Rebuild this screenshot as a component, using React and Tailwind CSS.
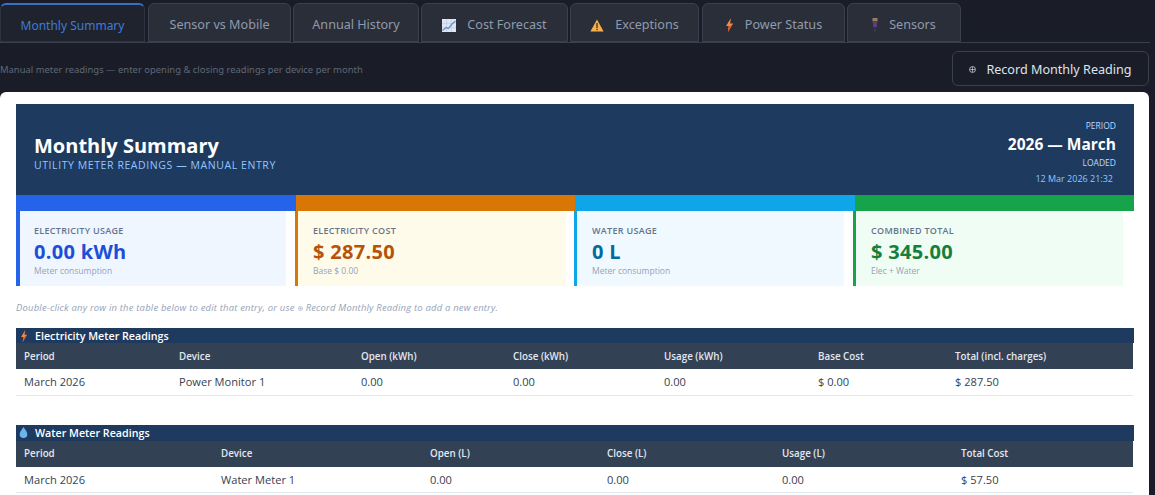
const Bolt = ({ className }) => (
  <svg viewBox="0 0 10 18" className={className}>
    <path d="M6.8 0 L0.6 10.4 H4 L3 18 L9.6 7 H5.8 Z" fill="#f58a3c" />
    <path d="M4 10.4 H5.8 L9.6 7 L3 18 Z" fill="#e2553a" />
  </svg>
);

const ChartIcon = () => (
  <svg viewBox="0 0 14 13" className="w-[14px] h-[13px]">
    <rect width="14" height="13" fill="#dfe6f2" />
    <path d="M0 4.3H14M0 8.6H14M4.6 0V13M9.3 0V13" stroke="#bcc8dc" strokeWidth="0.6" />
    <path d="M0.5 11.5 L4 8.5 L6.5 9.5 L10 5 L13.5 2" fill="none" stroke="#6b93cf" strokeWidth="1.4" />
  </svg>
);

const WarnIcon = () => (
  <svg viewBox="0 0 14 13" className="w-[14px] h-[13px]">
    <path d="M7 0.5 L13.6 12.5 H0.4 Z" fill="#f6b14c" />
    <rect x="6.3" y="4" width="1.4" height="5" fill="#4b3a1c" />
    <rect x="6.3" y="9.8" width="1.4" height="1.4" fill="#4b3a1c" />
  </svg>
);

const ProbeIcon = () => (
  <svg viewBox="0 0 6 14" className="w-[6px] h-[14px]">
    <rect x="0.5" y="0" width="5" height="3" fill="#9a7a63" />
    <rect x="0.5" y="3" width="5" height="2" fill="#4f4650" />
    <rect x="1" y="5" width="4" height="4" fill="#5b3c86" />
    <rect x="2.2" y="9" width="1.6" height="5" fill="#3c3550" />
  </svg>
);

const Drop = () => (
  <svg viewBox="0 0 10 13" className="w-[9px] h-[11px]">
    <path d="M5 0 C6.5 3 9.5 5.5 9.5 8.5 A4.5 4.5 0 0 1 0.5 8.5 C0.5 5.5 3.5 3 5 0 Z" fill="#6cb4ee" />
  </svg>
);

const RecordGlyph = ({ className }) => (
  <svg viewBox="0 0 8 8" className={className}>
    <circle cx="4" cy="4" r="3.4" fill="none" stroke="currentColor" strokeWidth="0.8" />
    <path d="M1 4H7M4 1V7" stroke="currentColor" strokeWidth="0.7" />
  </svg>
);

const tabs = [
  { label: "Monthly Summary", width: "w-[145px] mr-px", active: true },
  { label: "Sensor vs Mobile", width: "w-[143px]" },
  { label: "Annual History", width: "w-[126px]" },
  { label: "Cost Forecast", width: "w-[147px]", icon: <ChartIcon /> },
  { label: "Exceptions", width: "w-[129px] mr-px", icon: <WarnIcon /> },
  { label: "Power Status", width: "w-[143px]", icon: <Bolt className="w-[9px] h-[14px]" /> },
  { label: "Sensors", width: "w-[114px]", icon: <ProbeIcon /> },
];

const stats = [
  {
    label: "ELECTRICITY USAGE",
    value: "0.00 kWh",
    note: "Meter consumption",
    bar: "bg-[#2563eb]",
    card: "mr-[10px] border-l-4 pl-[14px] bg-[#eff6ff] border-[#2563eb]",
    text: "text-[#1d4ed8]",
  },
  {
    label: "ELECTRICITY COST",
    value: "$ 287.50",
    note: "Base $ 0.00",
    bar: "bg-[#d97706]",
    card: "-ml-[0.5px] mr-[9px] border-l-[3px] pl-[15px] bg-[#fffbeb] border-[#d97706]",
    text: "text-[#b45309]",
  },
  {
    label: "WATER USAGE",
    value: "0 L",
    note: "Meter consumption",
    bar: "bg-[#0ea5e9]",
    card: "-ml-px mr-[10.5px] border-l-[3px] pl-[15px] bg-[#f0f9ff] border-[#0ea5e9]",
    text: "text-[#0369a1]",
  },
  {
    label: "COMBINED TOTAL",
    value: "$ 345.00",
    note: "Elec + Water",
    bar: "bg-[#16a34a]",
    card: "-ml-[1.5px] mr-[11px] border-l-[3px] pl-[15px] bg-[#f0fdf4] border-[#16a34a]",
    text: "text-[#15803d]",
  },
];

const StatCard = ({ stat }) => (
  <div className="flex-1 flex flex-col">
    <div className={`h-4 ${stat.bar}`} />
    <div className={`h-[75px] pt-[13px] ${stat.card}`}>
      <div className="text-[9px] leading-[14px] font-semibold tracking-[0.3px] text-[#64748b]">{stat.label}</div>
      <div className={`text-[20px] leading-[28px] font-bold tracking-[0.3px] ${stat.text}`}>{stat.value}</div>
      <div className="-mt-px text-[8.5px] leading-[12px] text-[#94a3b8]">{stat.note}</div>
    </div>
  </div>
);

const ReadingTable = ({ icon, title, cols, rows, titleHeight }) => (
  <div>
    <div className={`${titleHeight} bg-[#1e3a5f] flex items-center text-white text-[10.7px] font-semibold`}>
      <span className="w-[15px] flex justify-center">{icon}</span>
      <span className="ml-1 pt-[2px]">{title}</span>
    </div>
    <table className="w-[1117px] table-fixed border-collapse text-[11.1px]">
      <thead>
        <tr className="h-[26px] bg-[#334155] text-[#e2e8f0]">
          {cols.map(col => (
            <th key={col.name} className={`${col.width} pl-2 pt-[2px] text-left font-semibold text-[9.8px]`}>{col.name}</th>
          ))}
        </tr>
      </thead>
      <tbody>
        {rows.map((row, i) => (
          <tr key={i} className="h-[26px] border-b border-[#e2e8f0] text-[#374151]">
            {row.map((cell, j) => (
              <td key={j} className="pl-2 pt-[2px]">{cell}</td>
            ))}
          </tr>
        ))}
      </tbody>
    </table>
  </div>
);

const elecCols = [
  { name: "Period", width: "w-[155px]" },
  { name: "Device", width: "w-[182px]" },
  { name: "Open (kWh)", width: "w-[152px]" },
  { name: "Close (kWh)", width: "w-[151px]" },
  { name: "Usage (kWh)", width: "w-[154px]" },
  { name: "Base Cost", width: "w-[137px]" },
  { name: "Total (incl. charges)", width: "w-auto" },
];

const waterCols = [
  { name: "Period", width: "w-[197px]" },
  { name: "Device", width: "w-[209px]" },
  { name: "Open (L)", width: "w-[177px]" },
  { name: "Close (L)", width: "w-[175px]" },
  { name: "Usage (L)", width: "w-[179px]" },
  { name: "Total Cost", width: "w-auto" },
];

export default function App() {
  return (
    <div className="w-[1155px] h-[495px] overflow-hidden bg-[#1a1d27] font-['Noto_Sans',sans-serif]">
      <nav className="h-[43px] pt-[3px] flex gap-[2px] border-b border-[#3a404d] w-[1150px]">
        {tabs.map(tab => (
          <div
            key={tab.label}
            className={`${tab.width} h-[39px] pt-[5px] flex items-center justify-center gap-[11px] rounded-t-md border ${
              tab.active
                ? "text-[12px] border-[#2d3340] border-t-2 border-t-[#3b6fc4] bg-[#1f232e] text-[#3f7bd6]"
                : "text-[12.6px] border-[#3a404d] bg-[#2a2e39] text-[#8f9bad]"
            }`}
          >
            {tab.icon}
            {tab.label}
          </div>
        ))}
      </nav>

      <div className="h-[49px] w-[1149px] flex items-center justify-between">
        <span className="mt-[6px] text-[9.45px] text-[#5d6878]">Manual meter readings — enter opening &amp; closing readings per device per month</span>
        <button className="w-[197px] h-[35px] mt-[2px] pt-[4px] flex items-center justify-center gap-[10px] rounded-md border border-[#3a404d] text-[12.6px] text-[#dfe3ea]">
          <RecordGlyph className="w-[7px] h-[7px] -mt-[3px]" />
          Record Monthly Reading
        </button>
      </div>

      <main className="w-[1149px] h-[420px] bg-white rounded-t-md pt-3 px-4 font-['Open_Sans',sans-serif]">
        <header className="h-[91px] w-[1118px] bg-[#1e3a5f] flex justify-between pl-[18px] pr-[18px]">
          <div className="pt-[28px]">
            <h1 className="text-[20px] leading-[27px] font-bold text-white">Monthly Summary</h1>
            <p className="text-[10.5px] leading-[13px] tracking-[0.58px] text-[#93c5fd]">UTILITY METER READINGS — MANUAL ENTRY</p>
          </div>
          <div className="pt-[16px] text-right flex flex-col items-end">
            <span className="text-[8.5px] leading-[12px] text-[#bfdbfe]">PERIOD</span>
            <span className="text-[15.5px] leading-[24px] font-bold text-white">2026 — March</span>
            <span className="text-[8.5px] leading-[14px] text-[#bfdbfe]">LOADED</span>
            <span className="text-[9px] leading-[18px] pr-[3px] text-[#93c5fd]">12 Mar 2026 21:32</span>
          </div>
        </header>

        <section className="w-[1118px] flex">
          {stats.map(stat => (
            <StatCard key={stat.label} stat={stat} />
          ))}
        </section>

        <p className="mt-[15px] h-[27px] text-[9.45px] italic tracking-[0.2px] text-[#94a3b8] flex items-start gap-[2px]">
          Double-click any row in the table below to edit that entry, or use
          <RecordGlyph className="w-[5px] h-[5px] mt-[5px] mx-[1px]" />
          Record Monthly Reading to add a new entry.
        </p>

        <div className="flex flex-col gap-[29px] w-[1118px]">
          <ReadingTable
            icon={<Bolt className="w-[8px] h-[12px]" />}
            title="Electricity Meter Readings"
            titleHeight="h-[15px]"
            cols={elecCols}
            rows={[["March 2026", "Power Monitor 1", "0.00", "0.00", "0.00", "$ 0.00", "$ 287.50"]]}
          />
          <ReadingTable
            icon={<Drop />}
            title="Water Meter Readings"
            titleHeight="h-[16px]"
            cols={waterCols}
            rows={[["March 2026", "Water Meter 1", "0.00", "0.00", "0.00", "$ 57.50"]]}
          />
        </div>
      </main>
    </div>
  );
}
